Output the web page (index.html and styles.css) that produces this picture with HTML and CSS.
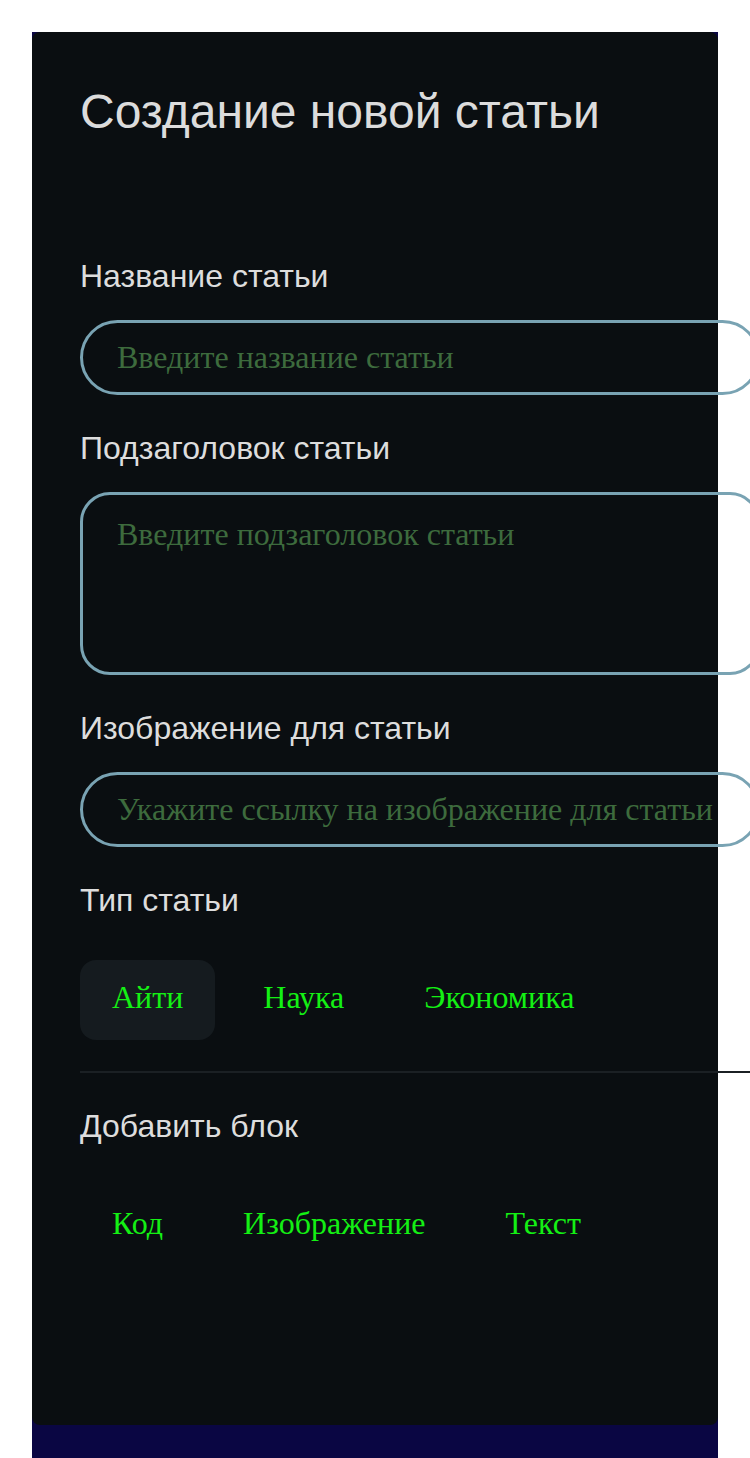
FILE: index.html
```html
<!DOCTYPE html>
<html lang="ru">
<head>
<meta charset="utf-8">
<title>Создание новой статьи</title>
<link rel="stylesheet" href="styles.css">
</head>
<body>
<div class="page">
  <div class="frame">
    <main class="card">
      <h1 class="title">Создание новой статьи</h1>
      <form class="form">
        <label class="label" for="t">Название статьи</label>
        <input class="field" id="t" type="text" placeholder="Введите название статьи">
        <label class="label" for="s">Подзаголовок статьи</label>
        <textarea class="field area" id="s" placeholder="Введите подзаголовок статьи"></textarea>
        <label class="label" for="i">Изображение для статьи</label>
        <input class="field" id="i" type="text" placeholder="Укажите ссылку на изображение для статьи">
        <div class="label">Тип статьи</div>
        <div class="chips types">
          <button type="button" class="chip active">Айти</button>
          <button type="button" class="chip">Наука</button>
          <button type="button" class="chip">Экономика</button>
        </div>
        <hr class="divider">
        <div class="label">Добавить блок</div>
        <div class="chips blocks">
          <button type="button" class="chip">Код</button>
          <button type="button" class="chip">Изображение</button>
          <button type="button" class="chip">Текст</button>
        </div>
      </form>
    </main>
  </div>
</div>
</body>
</html>
```
FILE: styles.css
```css
html, body {
  margin: 0;
  padding: 0;
  background: #ffffff;
}
body {
  font-family: "Liberation Sans", Arial, sans-serif;
}
.page {
  padding: 32px 32px 0;
}
.frame {
  background: #0a0643;
  padding-bottom: 40px;
}
.card {
  background: #0a0e11;
  border-radius: 8px;
  padding: 52px 48px 162px;
}
.title {
  margin: 0 0 119px;
  font-size: 48px;
  font-weight: 400;
  line-height: 55px;
  color: #dcdcdc;
}
.form {
  display: flex;
  flex-direction: column;
  align-items: flex-start;
}
.label {
  display: block;
  font-size: 32px;
  line-height: 37px;
  color: #dddddd;
  margin-bottom: 25px;
}
.field {
  box-sizing: border-box;
  flex: none;
  width: calc(100% + 90px);
  height: 75px;
  padding: 0 20px 0 34px;
  margin: 0 0 35px;
  border: 3px solid #79a3b3;
  border-radius: 40px;
  background: transparent;
  font-family: "Liberation Serif", "Times New Roman", serif;
  font-size: 32px;
  color: #3d6b3d;
  outline: none;
}
.field::placeholder {
  color: #3d6b3d;
  opacity: 1;
}
.area {
  height: 183px;
  padding-top: 21px;
  padding-bottom: 14px;
  border-radius: 30px;
  resize: none;
  line-height: 37px;
}
.chips {
  display: flex;
  gap: 16px;
}
.types {
  margin-top: 16px;
}
.types .chip {
  padding-bottom: 5px;
}
.blocks {
  margin-top: 13px;
}
.chip {
  height: 80px;
  padding: 0 32px;
  border: 0;
  border-radius: 16px;
  background: transparent;
  font-family: "Liberation Serif", "Times New Roman", serif;
  font-size: 32px;
  color: #14f014;
  cursor: pointer;
}
.chip.active {
  background: #151b1f;
}
.divider {
  flex: none;
  margin: 31px 0 35px;
  border: 0;
  height: 2px;
  background: #1b2024;
  width: calc(100% + 80px);
}
```
